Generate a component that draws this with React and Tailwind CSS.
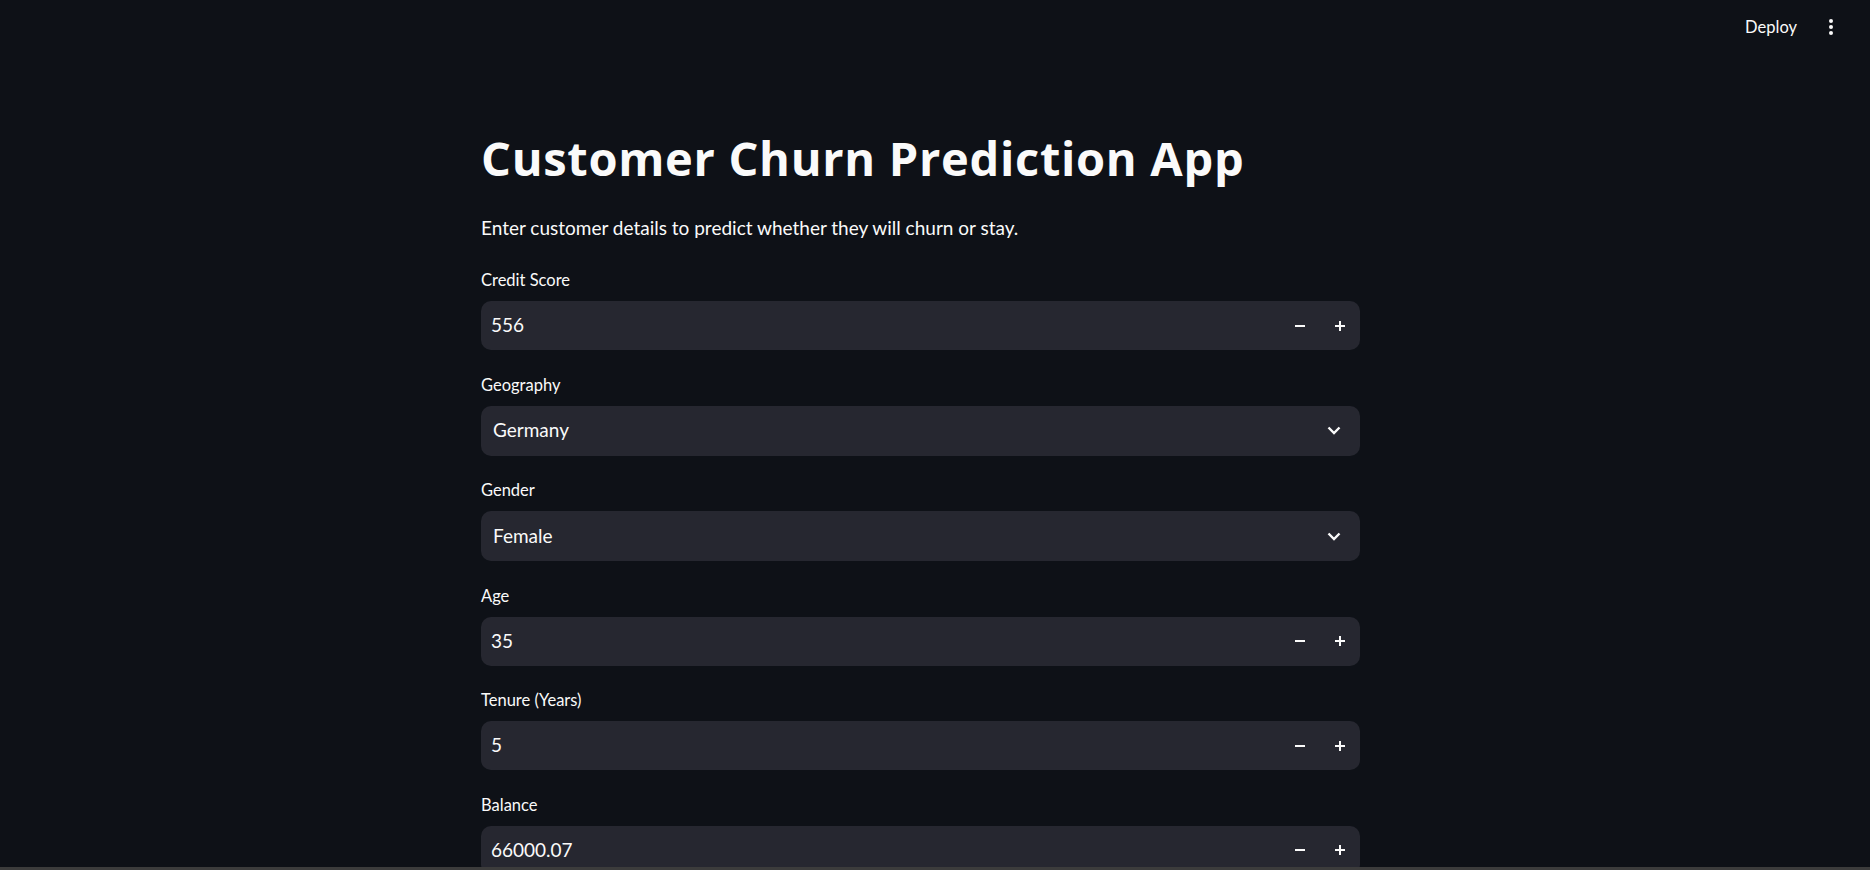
import { useState } from "react";

const fields = [
  { label: "Credit Score", type: "number", value: "556" },
  { label: "Geography", type: "select", value: "Germany" },
  { label: "Gender", type: "select", value: "Female" },
  { label: "Age", type: "number", value: "35" },
  { label: "Tenure (Years)", type: "number", value: "5" },
  { label: "Balance", type: "number", value: "66000.07" },
  { label: "Number of Products", type: "number", value: "2" },
];

function Minus() {
  return (
    <svg width="12" height="12" viewBox="0 0 12 12">
      <rect x="1" y="5" width="10" height="2" fill="#fafafa" />
    </svg>
  );
}

function Plus() {
  return (
    <svg width="12" height="12" viewBox="0 0 12 12">
      <rect x="1" y="5" width="10" height="2" fill="#fafafa" />
      <rect x="5" y="1" width="2" height="10" fill="#fafafa" />
    </svg>
  );
}

function Chevron() {
  return (
    <svg width="14" height="9" viewBox="0 0 14 9" fill="none">
      <path d="M1.5 1.5 L7 7 L12.5 1.5" stroke="#fafafa" strokeWidth="2.4" />
    </svg>
  );
}

function NumberField({ label, value }) {
  const [val] = useState(value);
  return (
    <div className="flex flex-col">
      <label className="h-[28px] text-[16.5px] leading-[28px]">{label}</label>
      <div className="mt-[7px] flex h-[49px] items-center rounded-[10px] bg-[#262730]">
        <div className="flex-1 pl-[10px] text-[19px]">{val}</div>
        <button className="flex h-full w-[40px] items-center justify-center">
          <Minus />
        </button>
        <button className="flex h-full w-[40px] items-center justify-center">
          <Plus />
        </button>
      </div>
    </div>
  );
}

function SelectField({ label, value }) {
  return (
    <div className="flex flex-col">
      <label className="h-[28px] text-[16.5px] leading-[28px]">{label}</label>
      <div className="mt-[7px] flex h-[50px] items-center rounded-[10px] bg-[#262730]">
        <div className="flex-1 pl-[12px] text-[19px]">{value}</div>
        <div className="pr-[19px]">
          <Chevron />
        </div>
      </div>
    </div>
  );
}

export default function App() {
  return (
    <div
      className="min-h-screen bg-[#0e1117] text-[#fafafa]"
      style={{ fontFamily: "Lato, 'Noto Sans', sans-serif" }}
    >
      <header className="flex h-[54px] items-center justify-end gap-[32px] pr-[37px]">
        <span className="text-[16.5px]">Deploy</span>
        <div className="flex flex-col gap-[2px]">
          <span className="h-[4px] w-[4px] rounded-full bg-[#fafafa]" />
          <span className="h-[4px] w-[4px] rounded-full bg-[#fafafa]" />
          <span className="h-[4px] w-[4px] rounded-full bg-[#fafafa]" />
        </div>
      </header>

      <main className="pl-[481px] pt-[76px]">
        <div className="w-[879px]">
          <h1
            className="text-[47px] font-bold leading-[56px] tracking-[0.7px]"
            style={{ fontFamily: "'Open Sans', 'Noto Sans', sans-serif" }}
          >
            Customer Churn Prediction App
          </h1>
          <p className="mt-[27px] text-[19px] leading-[30px]">
            Enter customer details to predict whether they will churn or stay.
          </p>
          <div className="mt-[23px] flex flex-col gap-[20.5px] pb-[200px]">
            {fields.map((f) =>
              f.type === "select" ? (
                <SelectField key={f.label} label={f.label} value={f.value} />
              ) : (
                <NumberField key={f.label} label={f.label} value={f.value} />
              )
            )}
          </div>
        </div>
      </main>

      <div className="fixed bottom-0 left-0 right-0 h-[3px] bg-[#3c3c3c]" />
    </div>
  );
}
